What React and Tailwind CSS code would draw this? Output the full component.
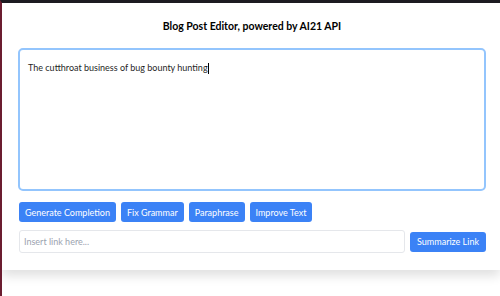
const buttons = ['Generate Completion', 'Fix Grammar', 'Paraphrase', 'Improve Text'];

export default function App() {
    return (
        <div
            className="min-h-[296px] w-[500px] bg-white border-t-[3px] border-t-[#1c1b21] border-l-2 border-l-[#6b1d30] overflow-hidden"
            style={{ fontFamily: 'Lato, "Noto Sans", sans-serif' }}
        >
            <div className="bg-white shadow-[0_6px_10px_rgba(0,0,0,0.12)] pl-[16px] pr-[14px] pt-[15px] pb-[17px]">
                <h1 className="text-center text-[10.5px] leading-[16px] font-bold text-black mb-[14px]">
                    Blog Post Editor, powered by AI21 API
                </h1>
                <div className="h-[143px] border-2 border-[#93c5fd] rounded-[5px] px-[8px] pt-[11px] text-[9px] leading-[13px] text-[#1f1f1f]">
                    The cutthroat business of bug bounty hunting
                    <span className="inline-block w-px h-[11px] bg-black align-middle"></span>
                </div>
                <div className="flex gap-[5px] mt-[11px] ml-px">
                    {buttons.map((b) => (
                        <button
                            key={b}
                            className="h-[20px] px-[6px] rounded-[3px] bg-[#3b82f6] text-white text-[9px] leading-none"
                        >
                            {b}
                        </button>
                    ))}
                </div>
                <div className="flex items-center gap-[5px] mt-[8px] ml-px">
                    <input
                        type="text"
                        placeholder="Insert link here..."
                        className="flex-1 h-[23px] border border-[#e5e7eb] rounded-[3px] px-[4px] text-[9px] placeholder:text-[#9ca3af] focus:outline-none"
                    />
                    <button className="h-[20px] px-[7px] rounded-[3px] bg-[#3b82f6] text-white text-[9px] leading-none">
                        Summarize Link
                    </button>
                </div>
            </div>
        </div>
    );
}
